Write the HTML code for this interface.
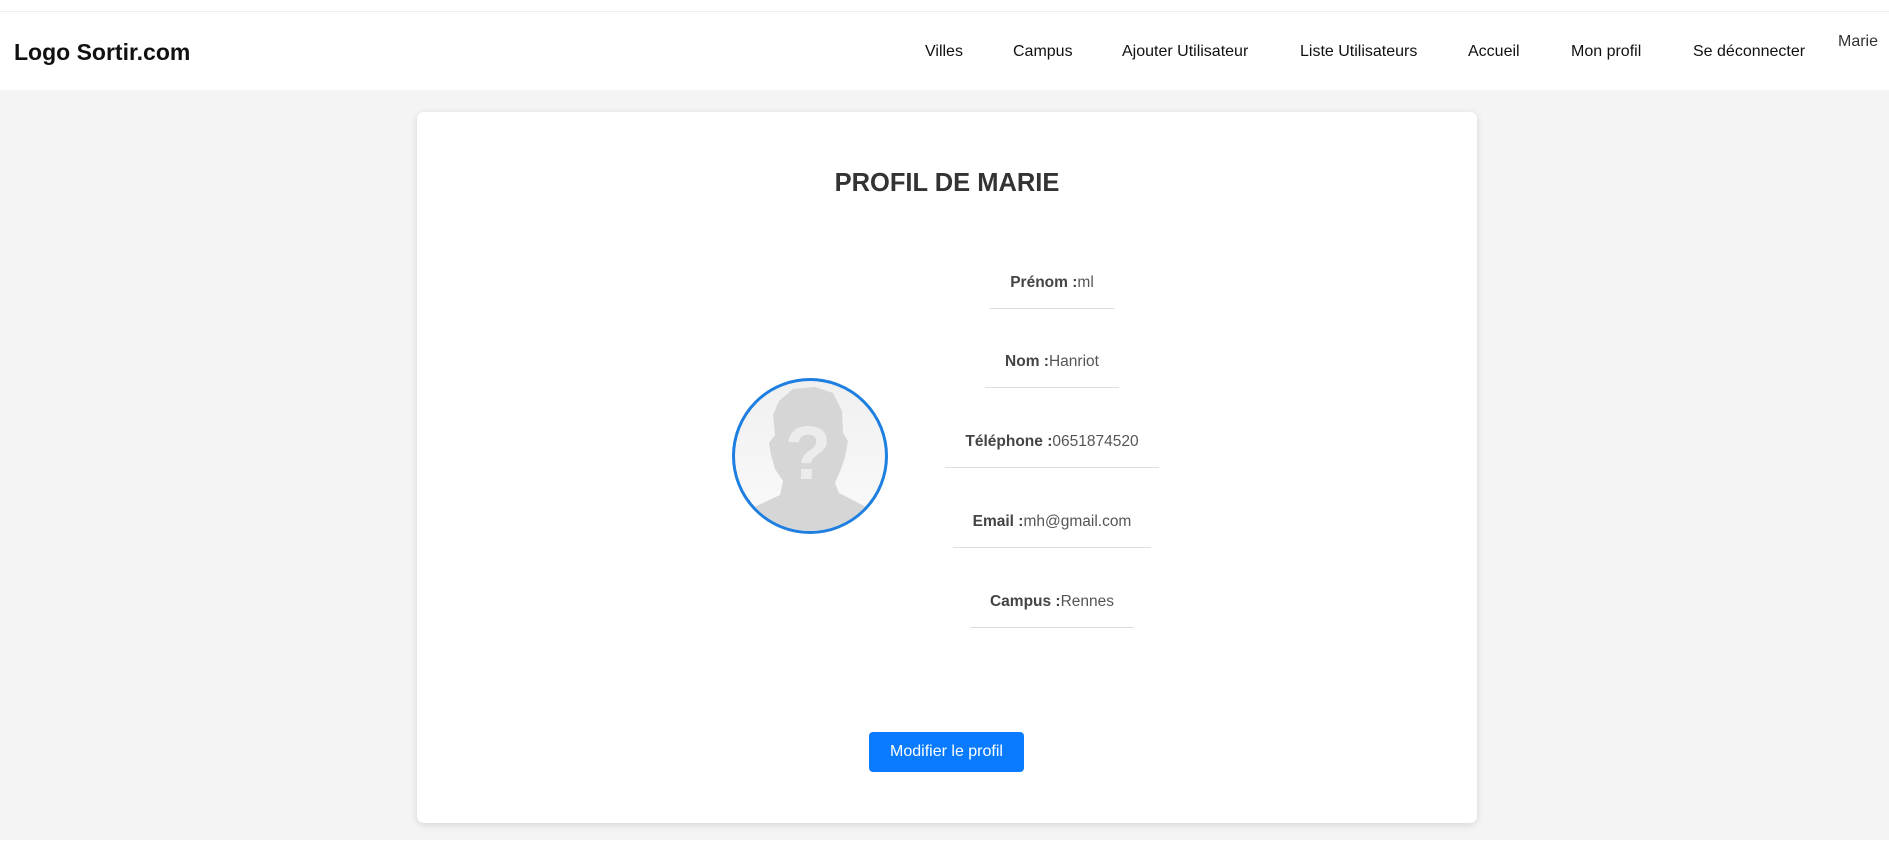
<!DOCTYPE html>
<html><head><meta charset="utf-8"><style>
*{margin:0;padding:0;box-sizing:border-box}
body{width:1889px;height:852px;background:#fff;font-family:"Liberation Sans",Arial,sans-serif;position:relative;overflow:hidden}
.top{position:absolute;left:0;top:0;width:1889px;height:12px;background:#fff;border-bottom:1px solid #eee}
.nav{position:absolute;left:0;top:12px;width:1889px;height:78px;background:#fff}
.logo{position:absolute;left:14px;top:27px;font-size:23px;font-weight:bold;color:#111}
.nav a{position:absolute;top:31px;font-size:16px;color:#111;text-decoration:none}
.bg{position:absolute;left:0;top:90px;width:1889px;height:750px;background:#f4f4f4}
.card{position:absolute;left:417px;top:112px;width:1060px;height:711px;background:#fff;border-radius:7px;box-shadow:0 2px 8px rgba(0,0,0,.12)}
.title{position:absolute;left:0;width:1894px;top:169px;text-align:center;font-size:25.5px;font-weight:bold;color:#333}
.f{position:absolute;left:852px;width:400px;text-align:center}
.f span{display:inline-block;padding:0 20px 16px;border-bottom:1px solid #ddd;font-size:15.5px;color:#555;line-height:18px}
.f b{color:#444}
.av{position:absolute;left:732px;top:378px;width:156px;height:156px;border-radius:50%;border:3px solid #1e7fe0;background:linear-gradient(#f0f0f0,#fafafa);overflow:hidden}
.btn{position:absolute;left:869px;top:732px;width:155px;height:40px;background:#0a7bff;border-radius:4px;color:#fff;font-size:16px;text-align:center;line-height:40px}
</style></head><body>
<div class="top"></div>
<div class="nav">
<div class="logo">Logo Sortir.com</div>
<a style="left:925px">Villes</a>
<a style="left:1013px">Campus</a>
<a style="left:1122px">Ajouter Utilisateur</a>
<a style="left:1300px">Liste Utilisateurs</a>
<a style="left:1468px">Accueil</a>
<a style="left:1571px">Mon profil</a>
<a style="left:1693px">Se déconnecter</a>
<a style="left:1838px;top:21px;color:#333">Marie</a>
</div>
<div class="bg"></div>
<div class="card"></div>
<div class="title">PROFIL DE MARIE</div>
<div class="av"><svg width="150" height="150" viewBox="0 0 150 150">
<path d="M44 20 L58 8 L80 6 L98 12 L107 30 L108 52 L113 60 L110 76 L106 88 L100 102 L104 112 L135 128 L150 150 L0 150 L15 128 L45 114 L48 100 L40 88 L36 74 L34 62 L40 54 L38 34 Z" fill="#d6d6d6"/>
<text x="73" y="98" font-size="76" font-weight="bold" fill="#ececec" text-anchor="middle" font-family="Liberation Sans,sans-serif">?</text>
</svg></div>
<div class="f" style="top:274px"><span><b>Prénom :</b>ml</span></div>
<div class="f" style="top:353px"><span><b>Nom :</b>Hanriot</span></div>
<div class="f" style="top:433px"><span><b>Téléphone :</b>0651874520</span></div>
<div class="f" style="top:513px"><span><b>Email :</b>mh@gmail.com</span></div>
<div class="f" style="top:593px"><span><b>Campus :</b>Rennes</span></div>
<div class="btn">Modifier le profil</div>
</body></html>
